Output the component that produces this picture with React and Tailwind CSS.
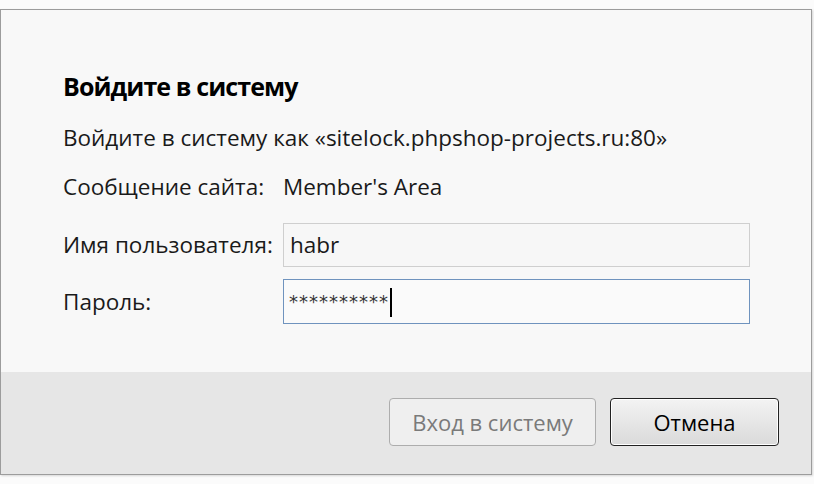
export default function App() {
  const font = { fontFamily: '"Open Sans", "Noto Sans", sans-serif' };
  return (
    <div className="w-[814px] h-[484px] bg-[#fbfbfb] pt-[9px] overflow-hidden" style={font}>
      <div className="w-[812px] h-[466px] border border-[#9c9c9c] bg-[#f8f8f8] flex flex-col shadow-[1px_1px_2px_rgba(0,0,0,0.15)]">
        <div className="flex-1 pl-[62px] pr-[61px] pt-[60px] text-[#1a1a1a]">
          <div className="text-[25px] font-bold leading-[32px] tracking-[-0.9px] text-black">Войдите в систему</div>
          <div className="mt-[22px] text-[22.5px] leading-[28px]">
            Войдите в систему как «sitelock.phpshop-projects.ru:80»
          </div>
          <div className="mt-[21px] flex text-[22.5px] leading-[28px]">
            <span className="w-[220px]">Сообщение сайта:</span>
            <span>Member's Area</span>
          </div>
          <div className="mt-[22px] flex items-center">
            <span className="w-[220px] text-[22.5px] leading-[28px]">Имя пользователя:</span>
            <div className="w-[467px] h-[44px] border border-[#cfcfcf] bg-[#f7f7f7] flex items-center pl-[6px] text-[22.5px] text-[#1a1a1a]">
              habr
            </div>
          </div>
          <div className="mt-[12px] flex items-center">
            <span className="w-[220px] text-[22.5px] leading-[28px]">Пароль:</span>
            <div className="w-[467px] h-[45px] border border-[#6f93be] bg-[#fafafa] flex items-center pl-[5px] text-[#333]">
              <span className="text-[18px] tracking-[1px]" style={{ fontFamily: '"DejaVu Sans", sans-serif' }}>**********</span>
              <span className="ml-[1px] w-[2px] h-[29px] bg-black mt-[2px]" />
            </div>
          </div>
        </div>
        <div className="h-[102px] bg-[#e6e6e6] flex justify-end items-start pt-[26px] pr-[32px] gap-[14px]">
          <div className="w-[207px] h-[48px] rounded-[4px] border border-[#adadad] bg-[#efefef] flex items-center justify-center text-[22px] text-[#7a7a7a]">
            Вход в систему
          </div>
          <div className="w-[169px] h-[48px] rounded-[4px] border border-[#222] bg-gradient-to-b from-[#f3f3f3] to-[#dadada] shadow-[inset_0_0_0_1px_#fff] flex items-center justify-center text-[22px] text-black">
            Отмена
          </div>
        </div>
      </div>
    </div>
  );
}
